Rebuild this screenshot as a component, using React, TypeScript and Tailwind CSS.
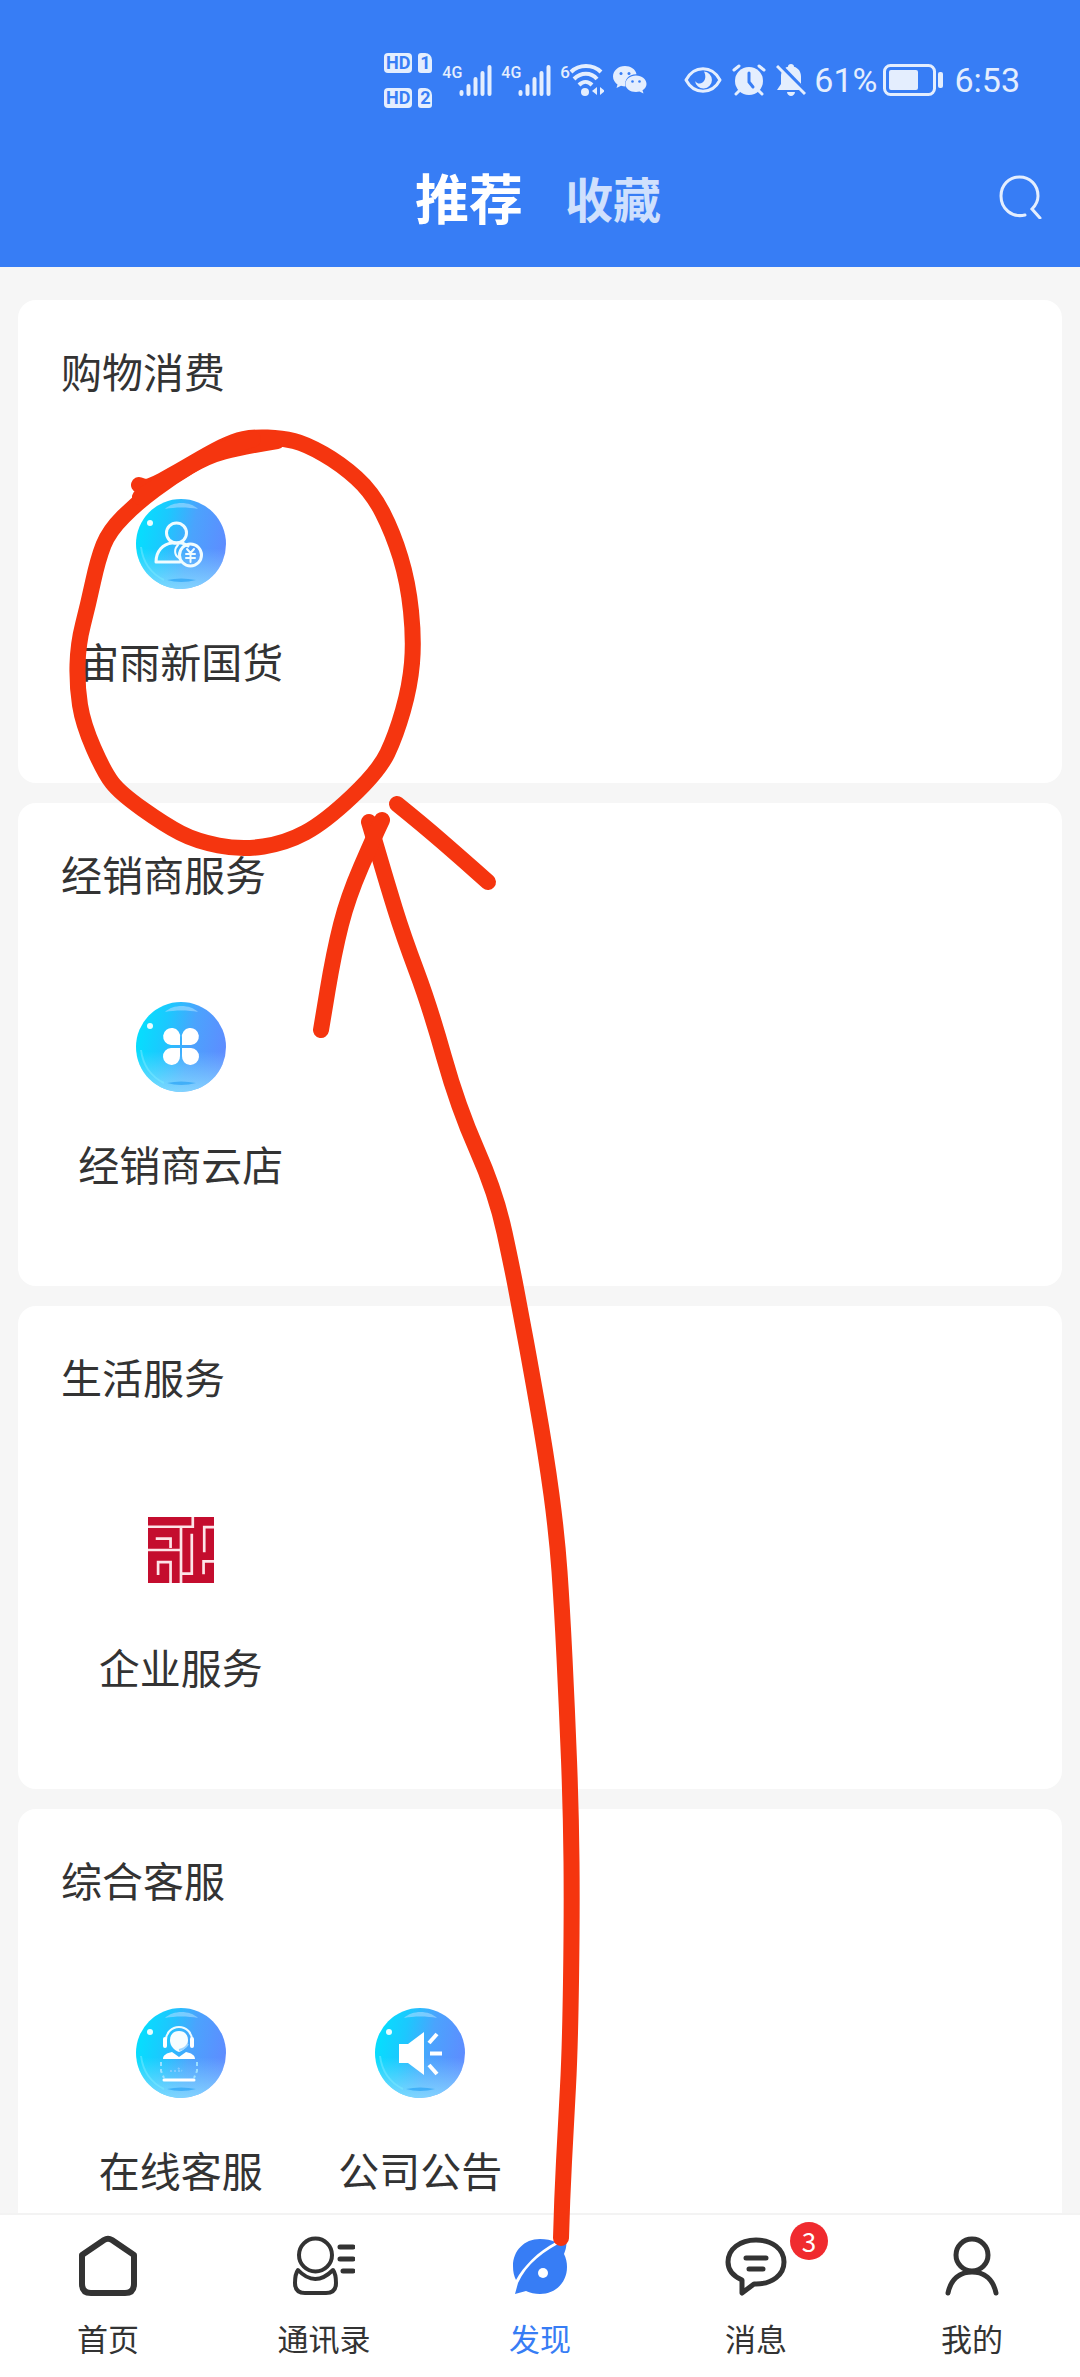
import type { ReactNode } from "react";

type Point = [number, number];

interface Service {
  name: string;
  icon: ReactNode;
}

interface Section {
  title: string;
  services: Service[];
}

interface NavItem {
  label: string;
  icon: ReactNode;
  active?: boolean;
  badge?: number;
}

/* ---------- status bar ---------- */

function SimBadge({ slot }: { slot: number }) {
  return (
    <div className="flex gap-[6px] font-['Roboto',sans-serif] text-[18px] leading-[20px] font-bold text-[#377df5]">
      <span className="h-5 w-7 rounded-[4px] bg-[#e4eefe] text-center">HD</span>
      <span className="h-5 w-[14px] rounded-[3px] rounded-tr-[7px] bg-[#e4eefe] text-center">{slot}</span>
    </div>
  );
}

function Signal() {
  return (
    <div className="flex items-start">
      <span className="w-[17px] font-['Roboto',sans-serif] text-[16px] leading-[18px] font-medium">4G</span>
      <svg className="h-8 w-[33px]" viewBox="0 0 33 32" stroke="currentColor" strokeWidth="4" strokeLinecap="round">
        <path d="M2.5 28v2M9.500 22v8M16.500 15v15M23.500 9v21M30.500 3v27" />
      </svg>
    </div>
  );
}

function Wifi() {
  return (
    <div className="flex items-start">
      <span className="w-[9px] font-['Roboto',sans-serif] text-[17px] leading-[18px] font-medium">6</span>
      <svg className="h-[34px] w-[35px]" viewBox="0 0 35 34" fill="none" stroke="currentColor" strokeWidth="4">
        <path d="M2 9C10 1 24 1 32 9" />
        <path d="M5 16C12 9 22 9 28 16" />
        <path d="M10 22C14 18 19 18 23 22" />
        <circle cx="16" cy="29" r="4" fill="currentColor" stroke="none" />
        <path d="M28 24v8l-5-4zM31 24v8l5-4z" fill="currentColor" stroke="none" />
      </svg>
    </div>
  );
}

function Wechat() {
  return (
    <svg className="h-[28px] w-[34px]" viewBox="0 0 34 28">
      <path
        d="M12 0C5 0 0 5 0 10.500c0 3.500 2 6 4.500 8L3.500 22l4.500-2.200c1.500.5 3 .7 4.500.7C11 13 16 8 23.500 8.200 22.500 3 17.500 0 12 0z"
        fill="currentColor"
      />
      <path
        d="M23 9.500c-6 0-10.500 3.800-10.500 8.500S17 26 23 26c1.200 0 2.400-.2 3.500-.5l4 2-1-3.200c2.500-1.500 4-3.800 4-6.300 0-4.700-4.500-8.500-10.500-8.500z"
        fill="currentColor"
      />
      <g fill="#377df5">
        <circle cx="8" cy="7.500" r="1.500" />
        <circle cx="16" cy="7.500" r="1.500" />
        <circle cx="19.500" cy="15.500" r="1.300" />
        <circle cx="26.500" cy="15.500" r="1.300" />
      </g>
    </svg>
  );
}

function Eye() {
  return (
    <svg className="h-7 w-[38px]" viewBox="0 0 38 28">
      <path
        d="M2 14C10 -1 28 -1 36 14C28 29 10 29 2 14z"
        fill="none"
        stroke="currentColor"
        strokeWidth="3"
        strokeLinejoin="round"
      />
      <path
        d="M20 5.500a8.500 8.500 0 1 1-9 9.500c1.500 2.500 5 3.500 7.500 1.500 3.500-2.500 3.500-7 1.500-11z"
        fill="currentColor"
      />
    </svg>
  );
}

function Alarm() {
  return (
    <svg className="h-8 w-[34px]" viewBox="0 0 34 32" fill="none" stroke="currentColor" strokeLinecap="round">
      <circle cx="17" cy="17" r="14" fill="currentColor" stroke="none" />
      <path d="M2 6l5-4M32 6l-5-4M7 27l-3 3M27 27l3 3" strokeWidth="3" />
      <path d="M17 9v9l4 5" stroke="#377df5" strokeWidth="3" />
    </svg>
  );
}

function BellOff() {
  return (
    <svg className="h-[34px] w-[30px]" viewBox="0 0 30 34">
      <path
        d="M15 1c-1.800 0-3 1-3 2.800C7 5 5 9 5 13.500V21l-4 6h28l-4-6v-7.500C25 9 22.500 5 18 3.800 18 2 16.800 1 15 1z"
        fill="currentColor"
      />
      <path d="M11 29h8c0 2-2 4-4 4s-4-2-4-4z" fill="currentColor" />
      <path d="M3 1l28 29" stroke="#377df5" strokeWidth="4" />
      <path d="M1 3l28 28" stroke="currentColor" strokeWidth="3" />
    </svg>
  );
}

function Battery() {
  return (
    <svg className="h-8 w-[61px]" viewBox="0 0 61 32">
      <rect x="1.500" y="1.500" width="50" height="29" rx="6" fill="none" stroke="currentColor" strokeWidth="3" />
      <rect x="6" y="6" width="29" height="20" rx="2" fill="currentColor" />
      <rect x="55" y="8" width="5" height="16" rx="2" fill="currentColor" />
    </svg>
  );
}

function StatusBar() {
  return (
    <div className="flex h-40 items-center justify-end pr-[60px] text-[#e4eefe]">
      <div className="mr-[10px] flex flex-col gap-[15px]">
        <SimBadge slot={1} />
        <SimBadge slot={2} />
      </div>
      <div className="mr-[37px] flex items-center gap-[9px]">
        <Signal />
        <Signal />
        <Wifi />
        <Wechat />
      </div>
      <div className="flex items-center gap-[10px]">
        <Eye />
        <Alarm />
        <BellOff />
      </div>
      <span className="ml-[8px] font-['Roboto',sans-serif] text-[34px] leading-[40px]">61%</span>
      <div className="ml-[6px]">
        <Battery />
      </div>
      <time className="ml-[10px] font-['Roboto',sans-serif] text-[34px] leading-[40px]">6:53</time>
    </div>
  );
}

function Header() {
  return (
    <header className="shrink-0 bg-[#377df5] pb-[33px]">
      <StatusBar />
      <div className="grid h-[74px] grid-cols-[1fr_auto_1fr] items-center">
        <div className="col-start-2 flex items-center gap-[42px] pr-1">
          <button className="text-[54px] leading-[74px] font-bold text-white">推荐</button>
          <button className="text-[48px] leading-[74px] font-bold text-[#cfe0fd]">收藏</button>
        </div>
        <button aria-label="搜索" className="mr-[38px] justify-self-end text-[#e4eefe]">
          <svg className="h-11 w-11" viewBox="0 0 44 44" fill="none" stroke="currentColor" strokeWidth="3" strokeLinecap="round">
            <path d="M27 40C14 43 3 34 3 21C3 10 11 2 21.500 2S40 10 40 21C40 26 38 30 34 34L42 43" />
          </svg>
        </button>
      </div>
    </header>
  );
}

/* ---------- service icons ---------- */

function Bubble({ id, children }: { id: string; children: ReactNode }) {
  return (
    <svg className="size-[90px]" viewBox="0 0 90 90">
      <defs>
        <linearGradient id={`${id}-fill`} x1="0" y1="0.4" x2="1" y2="0.6">
          <stop offset="0.05" stopColor="#08dcfe" />
          <stop offset="0.3" stopColor="#1cc8fe" />
          <stop offset="0.6" stopColor="#4ba3fd" />
          <stop offset="1" stopColor="#5f8bff" />
        </linearGradient>
        <linearGradient id={`${id}-glow`} x1="0" y1="0" x2="0" y2="1">
          <stop offset="0.55" stopColor="#8fe0ff" stopOpacity="0" />
          <stop offset="1" stopColor="#8fe0ff" stopOpacity="0.8" />
        </linearGradient>
      </defs>
      <circle cx="45" cy="45" r="45" fill={`url(#${id}-fill)`} />
      <circle cx="45" cy="45" r="45" fill={`url(#${id}-glow)`} />
      <path d="M29 10C37 2 54 2 62 10C52 8 39 8 29 10z" fill="#a8dcff" opacity="0.6" />
      <path d="M31 81Q45 78 60 81Q45 85 31 81z" fill="#2ba4f5" opacity="0.7" />
      <path d="M5 48C7 64 16 75 28 81" fill="none" stroke="#7ceaff" strokeWidth="2" opacity="0.5" />
      <circle cx="14" cy="24" r="3" fill="#e8fdff" />
      {children}
    </svg>
  );
}

function CustomerIcon() {
  return (
    <Bubble id="customer">
      <g fill="none" stroke="#f0fcff" strokeWidth="3" strokeLinejoin="round" strokeLinecap="round">
        <circle cx="40.500" cy="34" r="10" />
        <path d="M44 63H20C20 52 27 45 36 44H45C48 44 50 46 52 47" />
        <path d="M42 46C38 50 38 56 43 59" strokeWidth="2" />
        <circle cx="54.500" cy="56" r="11" />
        <path d="M51 50l3.500 4 3.500-4M50 55h9M50 59h9M54.500 55v8" strokeWidth="2" />
      </g>
    </Bubble>
  );
}

function CloverIcon() {
  return (
    <Bubble id="clover">
      <g fill="#fff">
        <path d="M44 43V36a8.500 8.500 0 1 0-9 7z" />
        <path d="M46 43V36a8.500 8.500 0 1 1 9 7z" />
        <path d="M44 46V54a8.500 8.500 0 1 1-9-8z" />
        <path d="M46 46V54a8.500 8.500 0 1 0 9-8z" />
      </g>
    </Bubble>
  );
}

function SealIcon() {
  return (
    <svg className="size-[90px] p-3" viewBox="0 0 196 196">
      <path d="M0 0H196V196H0z" fill="#c40d2e" />
      <g fill="none" stroke="#fde4e8" strokeWidth="8">
        <path d="M0 29H133V-4" />
        <path d="M98 29V200" />
        <path d="M0 98H98" />
        <path d="M23 64H67V92" />
        <path d="M30 172V134H67V200" />
        <path d="M98 168H130V50" />
        <path d="M200 30H167V105" />
        <path d="M200 132H165V170" />
      </g>
    </svg>
  );
}

function SupportIcon() {
  return (
    <Bubble id="support">
      <path d="M30 35V32a13 13 0 0 1 26 0v3" fill="none" stroke="#effbff" strokeWidth="2" />
      <rect x="27" y="29" width="4" height="11" rx="2" fill="#fff" />
      <rect x="54" y="29" width="4" height="11" rx="2" fill="#fff" />
      <path d="M43 23c-6 0-9 4-9 9 0 6 4 10 9 12 5-2 9-6 9-12 0-5-3-9-9-9z" fill="#f6fdff" />
      <path d="M43 42q6-1 9-6" fill="none" stroke="#9bd5ff" strokeWidth="2" />
      <path d="M27 51c0-4 4-6 9-7l7 5 7-5c5 1 9 3 9 7z" fill="#fff" />
      <path d="M25 54v9l3 7M61 54v9l-3 7" fill="none" stroke="#9be0ff" strokeWidth="2" strokeDasharray="4 3" />
      <path d="M34 63h10M42 60l4 3" stroke="#7fcaff" strokeWidth="2" strokeDasharray="2 2" />
      <path d="M28 72h30" stroke="#fff" strokeWidth="3" strokeLinecap="round" />
    </Bubble>
  );
}

function NoticeIcon() {
  return (
    <Bubble id="notice">
      <path d="M24 36h9l16-12v43L33 55h-9z" fill="#fff" />
      <g stroke="#fff" strokeWidth="4">
        <path d="M54 35l8-9" />
        <path d="M55 45.500h12" />
        <path d="M54 57l8 9" />
      </g>
    </Bubble>
  );
}

/* ---------- bottom navigation icons ---------- */

function HomeIcon() {
  return (
    <svg className="size-[62px]" viewBox="0 0 62 62" fill="none" stroke="currentColor" strokeWidth="6" strokeLinejoin="round">
      <path d="M5 21L27 6Q31 3.500 35 6L57 21V50Q57 59 48 59H14Q5 59 5 50z" />
    </svg>
  );
}

function ContactsIcon() {
  return (
    <svg className="size-[62px]" viewBox="0 0 62 62" fill="none" stroke="currentColor" strokeWidth="4" strokeLinejoin="round" strokeLinecap="round">
      <circle cx="22.500" cy="21" r="16.500" />
      <path d="M5 36Q22 54 40 36C43 40 43 44 43 49Q43 59 33 59H12Q2 59 2 49C2 44 2 40 5 36z" />
      <path d="M47 13H60M47 25H60M50 37H60" strokeWidth="5" />
    </svg>
  );
}

function DiscoverIcon() {
  return (
    <svg className="size-[62px]" viewBox="0 0 62 62">
      <path
        d="M31 5C15 5 4 17 4 32C4 38 5 42 7 46C14 33 29 17 47 8C42 6 37 5 31 5z"
        fill="currentColor"
      />
      <path
        d="M57 6C35 16 17 31 9 49L6 60L17 57C21 59 26 60 31 60C47 60 58 48 58 33C58 28 57 24 55 20C57 15 58 10 57 6z"
        fill="currentColor"
      />
      <circle cx="34" cy="39" r="5" fill="#fff" />
    </svg>
  );
}

function MessageIcon() {
  return (
    <svg className="size-[62px]" viewBox="0 0 62 62" fill="none" stroke="currentColor" strokeWidth="5" strokeLinejoin="round" strokeLinecap="round">
      <path d="M17 46C8 42 3 36 3 28C3 15 15 6 31 6S59 15 59 28S47 50 31 50H29L17 59z" />
      <path d="M21 24H41M24 35H38" />
    </svg>
  );
}

function ProfileIcon() {
  return (
    <svg className="size-[62px]" viewBox="0 0 62 62" fill="none" stroke="currentColor" strokeWidth="5" strokeLinecap="round">
      <circle cx="31" cy="21" r="16" />
      <path d="M7 59C10 45 19 38 31 38S52 45 55 59" />
    </svg>
  );
}

const sections: Section[] = [
  { title: "购物消费", services: [{ name: "宙雨新国货", icon: <CustomerIcon /> }] },
  { title: "经销商服务", services: [{ name: "经销商云店", icon: <CloverIcon /> }] },
  { title: "生活服务", services: [{ name: "企业服务", icon: <SealIcon /> }] },
  {
    title: "综合客服",
    services: [
      { name: "在线客服", icon: <SupportIcon /> },
      { name: "公司公告", icon: <NoticeIcon /> },
    ],
  },
];

const navItems: NavItem[] = [
  { label: "首页", icon: <HomeIcon /> },
  { label: "通讯录", icon: <ContactsIcon /> },
  { label: "发现", icon: <DiscoverIcon />, active: true },
  { label: "消息", icon: <MessageIcon />, badge: 3 },
  { label: "我的", icon: <ProfileIcon /> },
];

function SectionCard({ title, services }: Section) {
  return (
    <section className="shrink-0 rounded-[18px] bg-white px-[43px] pt-10 pb-[93px]">
      <h2 className="text-[41px] leading-[60px]">{title}</h2>
      <div className="mt-[99px] grid grid-cols-4">
        {services.map((service) => (
          <a key={service.name} href="#" className="flex flex-col items-center gap-[41px]">
            {service.icon}
            <span className="text-[41px] leading-[60px] whitespace-nowrap">{service.name}</span>
          </a>
        ))}
      </div>
    </section>
  );
}

function BottomNav() {
  return (
    <nav className="grid shrink-0 grid-cols-5 border-t-2 border-[#f3f3f3] bg-white pt-[19px] pb-[15px]">
      {navItems.map((item) => (
        <a
          key={item.label}
          href="#"
          className={`flex flex-col items-center gap-[18px] ${item.active ? "text-[#377df5]" : "text-[#333]"}`}
        >
          <span className="relative">
            {item.icon}
            {item.badge && (
              <span className="absolute -top-3 left-[65px] size-[38px] rounded-full bg-[#f02b2f] text-center text-[26px] leading-[38px] text-white">
                {item.badge}
              </span>
            )}
          </span>
          <span className="text-[31px] leading-[48px]">{item.label}</span>
        </a>
      ))}
    </nav>
  );
}

/* ---------- hand-drawn guide ---------- */

const strokes: Point[][] = [
  [
    [277, 441], [241, 447], [207, 456], [172, 477], [138, 502], [109, 531], [98, 559], [88, 605],
    [78, 644], [77, 686], [83, 724], [104, 772], [120, 793], [165, 825], [196, 841], [241, 850],
    [286, 843], [325, 822], [379, 771], [396, 735], [410, 686], [414, 640], [408, 582], [393, 533],
    [372, 492], [341, 464], [306, 444], [282, 438], [253, 437], [234, 441], [210, 453], [176, 473],
    [148, 488], [139, 485],
  ],
  [[253, 439], [215, 451], [176, 474], [140, 497]],
  [
    [561, 2238], [562, 2200], [566, 2123], [570, 2050], [572, 1913], [571, 1811], [567, 1709],
    [562, 1607], [557, 1536], [546, 1454], [528, 1352], [520, 1310], [513, 1272], [496, 1193],
    [458, 1107], [430, 1007], [403, 935], [387, 883], [375, 842], [369, 822],
  ],
  [[382, 820], [374, 837], [348, 897], [334, 952], [321, 1030]],
  [[397, 804], [423, 825], [461, 858], [488, 882]],
];

// Rounds the corners by running the curve through the midpoints
function toPath(points: Point[]) {
  let d = `M${points[0][0]} ${points[0][1]}`;
  for (let i = 1; i < points.length - 1; i++) {
    const [x, y] = points[i];
    const [nextX, nextY] = points[i + 1];
    d += ` Q${x} ${y} ${(x + nextX) / 2} ${(y + nextY) / 2}`;
  }
  const last = points[points.length - 1];
  return `${d} L${last[0]} ${last[1]}`;
}

function GuideOverlay() {
  return (
    <svg
      className="pointer-events-none absolute top-0 left-0 w-full"
      viewBox="0 0 1080 2377"
      fill="none"
      stroke="#f5350f"
      strokeWidth="16"
      strokeLinecap="round"
      strokeLinejoin="round"
      aria-hidden="true"
    >
      {strokes.map((points, i) => (
        <path key={i} d={toPath(points)} />
      ))}
    </svg>
  );
}

export default function App() {
  return (
    <div className="relative flex h-screen flex-col overflow-hidden bg-[#f6f6f6] font-['Noto_Sans_CJK_SC',sans-serif] text-[#333]">
      <Header />
      <main className="flex min-h-0 flex-1 flex-col gap-5 overflow-y-auto px-[18px] pt-[33px] [scrollbar-width:none]">
        {sections.map((section) => (
          <SectionCard key={section.title} {...section} />
        ))}
      </main>
      <BottomNav />
      <GuideOverlay />
    </div>
  );
}
